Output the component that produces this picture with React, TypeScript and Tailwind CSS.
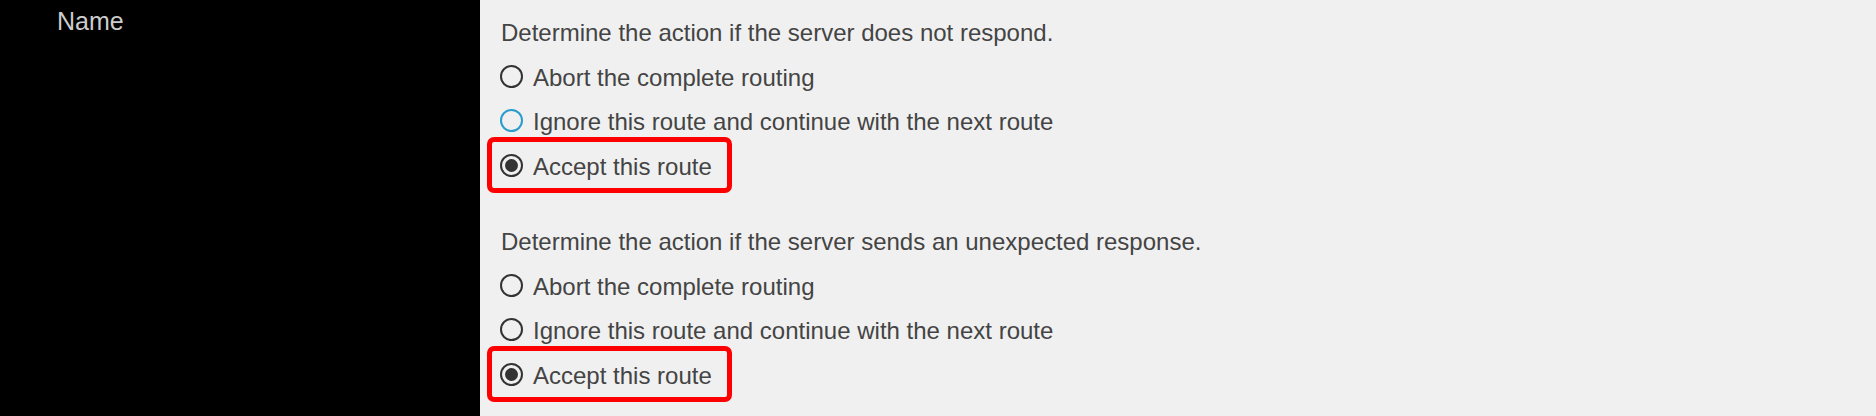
import React from 'react';

type RadioState = 'off' | 'hover' | 'on';

const font = { fontFamily: '"Liberation Sans", Arial, sans-serif' };

const Radio: React.FC<{ state: RadioState }> = ({ state }) => {
  const ring = state === 'hover' ? 'border-[#2a9bcc]' : 'border-[#333333]';
  return (
    <span className={`w-[23px] h-[23px] shrink-0 rounded-full border-2 ${ring} flex items-center justify-center`}>
      {state === 'on' && <span className="w-[13px] h-[13px] rounded-full bg-[#333333]" />}
    </span>
  );
};

const Option: React.FC<{ label: string; state: RadioState }> = ({ label, state }) => (
  <div className="h-[44px] flex items-center gap-[10px]">
    <Radio state={state} />
    <span className="pt-[3px] leading-[44px] whitespace-nowrap">{label}</span>
  </div>
);

const Group: React.FC<{ title: string; hoverIgnore?: boolean; className?: string }> = ({ title, hoverIgnore, className }) => (
  <div className={className}>
    <div className="h-[42px] leading-[42px] whitespace-nowrap pl-px">{title}</div>
    <Option label="Abort the complete routing" state="off" />
    <Option label="Ignore this route and continue with the next route" state={hoverIgnore ? 'hover' : 'off'} />
    {/* highlighted choice */}
    <div className="-mt-[5px] -ml-[13px] w-[245px] h-[56px] border-[5px] border-[#ff0000] rounded-[7px] pl-[8px] flex items-center gap-[10px]">
      <Radio state="on" />
      <span className="pt-[3px] leading-[44px] whitespace-nowrap">Accept this route</span>
    </div>
  </div>
);

export default function App() {
  return (
    <div className="w-[1876px] h-[416px] flex overflow-hidden" style={font}>
      <div className="w-[480px] shrink-0 bg-black pl-[57px] pt-[6px]">
        <div className="text-[25px] leading-[30px] text-[#cccccc]">Name</div>
      </div>
      <div className="flex-1 bg-[#f0f0f0] pl-5 pt-3 text-[24px] text-[#444444]">
        <Group title="Determine the action if the server does not respond." hoverIgnore />
        <Group title="Determine the action if the server sends an unexpected response." className="mt-7" />
      </div>
    </div>
  );
}
